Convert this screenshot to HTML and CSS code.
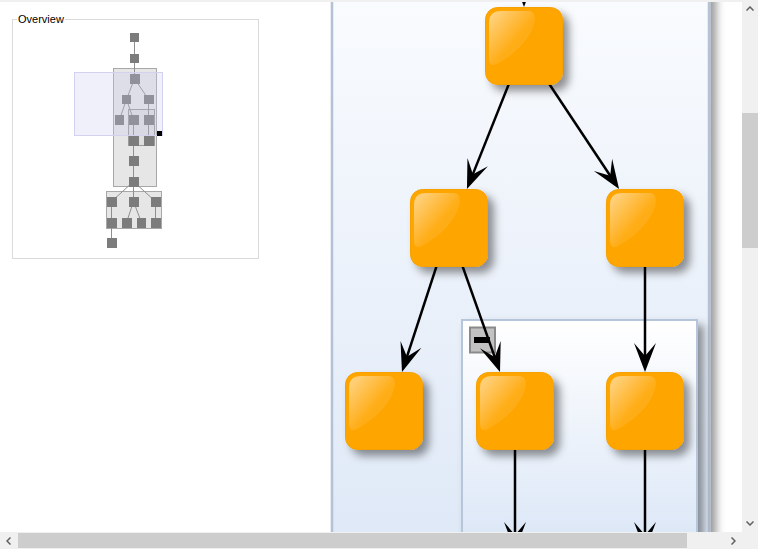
FILE: index.html
```html
<!DOCTYPE html>
<html lang="en">
<head>
    <meta charset="UTF-8">
    <title>Graph Viewer</title>
    <link rel="stylesheet" href="styles.css">
</head>
<body>
<div class="window">
    <div class="viewport">
        <div class="panes">
            <aside class="side">
                <fieldset class="overview">
                    <legend>Overview</legend>
                    <svg class="overview-svg" width="245" height="233" viewBox="13 25 245 233">
                        <!-- group nodes -->
                        <rect x="113.5" y="68.5" width="43" height="118" fill="#e6e6e6" stroke="#a8a8a8"/>
                        <rect x="128.5" y="109.5" width="26" height="36" fill="#dedede" stroke="#9a9a9a"/>
                        <rect x="106.5" y="191.5" width="55" height="37" fill="#e6e6e6" stroke="#a8a8a8"/>
                        <!-- edges -->
                        <g stroke="#8f8f8f" stroke-width="1">
                            <line x1="134.5" y1="37.5" x2="134.5" y2="78.5"/>
                            <line x1="134.5" y1="78.5" x2="126.5" y2="99.5"/>
                            <line x1="134.5" y1="78.5" x2="148.5" y2="99.5"/>
                            <line x1="126.5" y1="99.5" x2="119.5" y2="119.5"/>
                            <line x1="126.5" y1="99.5" x2="133.5" y2="119.5"/>
                            <line x1="148.5" y1="99.5" x2="148.5" y2="140.5"/>
                            <line x1="133.5" y1="119.5" x2="133.5" y2="181.5"/>
                            <line x1="133.5" y1="181.5" x2="111.5" y2="201.5"/>
                            <line x1="133.5" y1="181.5" x2="133.5" y2="201.5"/>
                            <line x1="133.5" y1="181.5" x2="155.5" y2="201.5"/>
                            <line x1="111.5" y1="201.5" x2="111.5" y2="242.5"/>
                            <line x1="133.5" y1="201.5" x2="126.5" y2="222.5"/>
                            <line x1="133.5" y1="201.5" x2="141.5" y2="222.5"/>
                            <line x1="155.5" y1="201.5" x2="155.5" y2="222.5"/>
                        </g>
                        <!-- nodes -->
                        <g fill="#7c7c7c">
                            <rect x="130" y="33" width="9" height="9"/>
                            <rect x="130" y="54" width="9" height="9"/>
                            <rect x="130" y="74" width="10" height="10"/>
                            <rect x="122" y="95" width="9" height="9"/>
                            <rect x="144" y="95" width="10" height="9"/>
                            <rect x="115" y="115" width="9" height="10"/>
                            <rect x="129" y="115" width="10" height="10"/>
                            <rect x="144" y="115" width="10" height="10"/>
                            <rect x="129" y="136" width="10" height="10"/>
                            <rect x="144" y="136" width="10" height="10"/>
                            <rect x="129" y="156" width="10" height="10"/>
                            <rect x="129" y="177" width="10" height="10"/>
                            <rect x="107" y="197" width="10" height="10"/>
                            <rect x="129" y="197" width="10" height="10"/>
                            <rect x="151" y="197" width="10" height="10"/>
                            <rect x="107" y="218" width="10" height="10"/>
                            <rect x="122" y="218" width="10" height="10"/>
                            <rect x="137" y="218" width="9" height="10"/>
                            <rect x="151" y="218" width="10" height="10"/>
                            <rect x="107" y="238" width="10" height="10"/>
                        </g>
                        <!-- visible area -->
                        <rect x="74.5" y="72.5" width="88" height="63" fill="rgba(200,200,238,0.28)" stroke="#d2d2f0"/>
                        <rect x="157" y="131" width="5" height="5" fill="#000"/>
                    </svg>
                </fieldset>
            </aside>
            <div class="canvas">
                <svg width="412" height="530" viewBox="330 2 412 530">
                    <defs>
                        <linearGradient id="groupBg" gradientUnits="userSpaceOnUse" x1="0" y1="0" x2="0" y2="532">
                            <stop offset="0" stop-color="#f9fbfe"/>
                            <stop offset="1" stop-color="#dfe9f7"/>
                        </linearGradient>
                        <linearGradient id="innerBg" gradientUnits="userSpaceOnUse" x1="0" y1="320" x2="0" y2="532">
                            <stop offset="0" stop-color="#ffffff"/>
                            <stop offset="1" stop-color="#dde8f7"/>
                        </linearGradient>
                        <linearGradient id="gloss" x1="0" y1="0" x2="1" y2="1">
                            <stop offset="0" stop-color="#fff" stop-opacity="0.55"/>
                            <stop offset="0.55" stop-color="#fff" stop-opacity="0.1"/>
                            <stop offset="1" stop-color="#fff" stop-opacity="0.04"/>
                        </linearGradient>
                        <filter id="shadow" x="-25%" y="-25%" width="160%" height="160%">
                            <feDropShadow dx="6" dy="6" stdDeviation="4" flood-color="#000" flood-opacity="0.42"/>
                        </filter>
                        <filter id="groupShadow" x="-5%" y="-5%" width="115%" height="115%">
                            <feDropShadow dx="6" dy="6" stdDeviation="4" flood-color="#000" flood-opacity="0.4"/>
                        </filter>
                        <marker id="arrow" markerUnits="userSpaceOnUse" viewBox="-30 -12 31 24" refX="-12" refY="0" markerWidth="31" markerHeight="24" orient="auto">
                            <path d="M0,0 L-29,-11 L-16,0 L-29,11 Z" fill="#000"/>
                        </marker>
                        <g id="node">
                            <rect x="0.5" y="0.5" width="77" height="77" rx="12" fill="#ffa500" stroke="#f6a100"/>
                            <path d="M4,16 Q4,4 16,4 L44,4 Q52,5 49,17 Q42,40 12,57 Q4,61 4,51 Z" fill="url(#gloss)"/>
                        </g>
                    </defs>

                    <!-- outer group -->
                    <rect x="332" y="-300" width="377" height="1200" fill="url(#groupBg)" stroke="#b3c2d6" stroke-width="2.5" filter="url(#groupShadow)"/>
                    <!-- inner group -->
                    <rect x="462" y="320" width="235" height="400" fill="url(#innerBg)" stroke="#b6c6da" stroke-width="2" filter="url(#groupShadow)"/>
                    <rect x="470" y="327.5" width="25" height="25" fill="#c2c2c2" stroke="#8a8a8a" stroke-width="2"/>
                    <rect x="474" y="337" width="16" height="6" fill="#000"/>

                    <!-- edges -->
                    <g stroke="#000" stroke-width="2.5" marker-end="url(#arrow)">
                        <line x1="524" y1="-60" x2="524" y2="-5"/>
                        <line x1="524" y1="46" x2="471.4" y2="177.9"/>
                        <line x1="524" y1="46" x2="612.4" y2="179"/>
                        <line x1="449" y1="228" x2="405.7" y2="360.6"/>
                        <line x1="449" y1="228" x2="496" y2="360.7"/>
                        <line x1="645" y1="228" x2="645" y2="360"/>
                        <line x1="515" y1="411" x2="515" y2="539"/>
                        <line x1="645" y1="411" x2="645" y2="539"/>
                    </g>

                    <!-- nodes -->
                    <use href="#node" x="485" y="7" filter="url(#shadow)"/>
                    <use href="#node" x="410" y="189" filter="url(#shadow)"/>
                    <use href="#node" x="606" y="189" filter="url(#shadow)"/>
                    <use href="#node" x="345" y="372" filter="url(#shadow)"/>
                    <use href="#node" x="476" y="372" filter="url(#shadow)"/>
                    <use href="#node" x="606" y="372" filter="url(#shadow)"/>
                </svg>
            </div>
        </div>
    </div>

    <div class="vscroll">
        <div class="sb-btn">
            <svg width="8" height="5"><polyline points="0.5,4.5 4,1 7.5,4.5" fill="none" stroke="#606060" stroke-width="1.5"/></svg>
        </div>
        <div class="sb-track"><div class="vthumb"></div></div>
        <div class="sb-btn">
            <svg width="8" height="5"><polyline points="0.5,0.5 4,4 7.5,0.5" fill="none" stroke="#606060" stroke-width="1.5"/></svg>
        </div>
    </div>

    <div class="hscroll">
        <div class="sb-btn">
            <svg width="5" height="8"><polyline points="4.5,0.5 1,4 4.5,7.5" fill="none" stroke="#606060" stroke-width="1.5"/></svg>
        </div>
        <div class="sb-track"><div class="hthumb"></div></div>
        <div class="sb-btn">
            <svg width="5" height="8"><polyline points="0.5,0.5 4,4 0.5,7.5" fill="none" stroke="#606060" stroke-width="1.5"/></svg>
        </div>
    </div>

    <div class="corner"></div>
</div>
</body>
</html>
```

FILE: styles.css
```css
/* base */
body {
    margin: 0;
    font-family: "Liberation Sans", Arial, sans-serif;
    background-color: #fff;
}

.window {
    display: grid;
    grid-template-columns: 742px 16px;
    grid-template-rows: 532px 17px;
    width: 758px;
    height: 549px;
    background-color: #f0f0f0;
    overflow: hidden;
}

/* main area */
.viewport {
    display: flex;
    flex-direction: column;
    padding-top: 2px;
    overflow: hidden;
}

.panes {
    display: flex;
    flex: 1;
    min-height: 0;
}

.side {
    width: 330px;
    flex-shrink: 0;
    background-color: #fff;
    padding: 11px 0 0 12px;
    box-sizing: border-box;
}

/* overview box */
.overview {
    margin: 0;
    padding: 0;
    width: 247px;
    height: 246px;
    box-sizing: border-box;
    border: 1px solid #dadada;
    min-inline-size: 0;
}

.overview legend {
    margin-left: 4px;
    padding: 0 1px;
    font-size: 11px;
    line-height: 13px;
    color: #000;
}

.overview-svg {
    display: block;
    margin-top: -1px;
}

.canvas {
    flex: 1;
    background-color: #fff;
    overflow: hidden;
}

.canvas svg {
    display: block;
}

/* scrollbars */
.vscroll {
    display: flex;
    flex-direction: column;
    background-color: #f0f0f0;
}

.hscroll {
    display: flex;
    background-color: #f0f0f0;
}

.sb-btn {
    display: flex;
    align-items: center;
    justify-content: center;
    flex-shrink: 0;
}

.vscroll .sb-btn {
    height: 17px;
}

.hscroll .sb-btn {
    width: 17px;
}

.sb-track {
    flex: 1;
}

.vthumb {
    margin-top: 96px;
    height: 135px;
    background-color: #cdcdcd;
}

.hthumb {
    margin-top: 1px;
    margin-left: 1px;
    width: 669px;
    height: 15px;
    background-color: #cdcdcd;
}

.corner {
    background-color: #f0f0f0;
}
```
